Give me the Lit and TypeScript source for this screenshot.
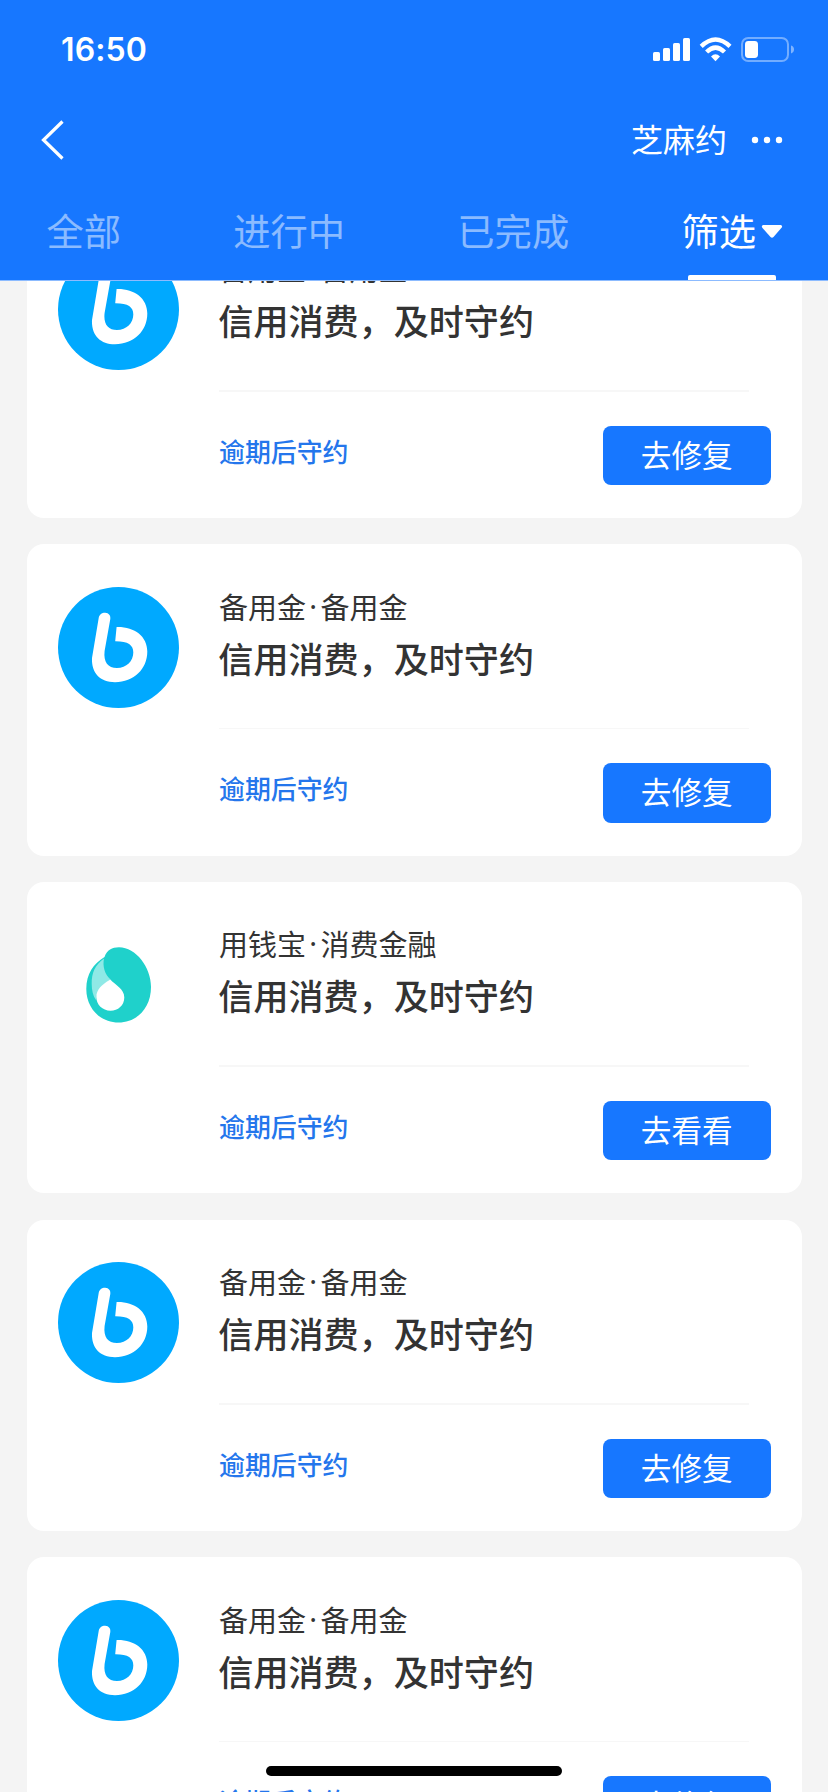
import { LitElement, html, css, svg } from "lit";
import { customElement, property } from "lit/decorators.js";
import { classMap } from "lit/directives/class-map.js";

interface Pledge {
  logo: "b" | "drop";
  brand: string;
  product: string;
  title: string;
  status: string;
  action: string;
}

const spare = (): Pledge => ({
  logo: "b",
  brand: "备用金",
  product: "备用金",
  title: "信用消费，及时守约",
  status: "逾期后守约",
  action: "去修复",
});

const ITEMS: Pledge[] = [
  spare(),
  spare(),
  { ...spare(), logo: "drop", brand: "用钱宝", product: "消费金融", action: "去看看" },
  spare(),
  spare(),
];

const TABS = ["全部", "进行中", "已完成"];

@customElement("status-bar")
export class StatusBar extends LitElement {
  static styles = css`
    :host {
      display: flex;
      justify-content: space-between;
      height: 100px;
      box-sizing: border-box;
      padding: 30px 32px 0 61px;
    }
    .time {
      font: 600 32px/40px Inter, sans-serif;
      letter-spacing: 0.1px;
      color: #fff;
    }
    .icons {
      width: 144px;
      height: 40px;
    }
  `;
  render() {
    return html`
      <span class="time">16:50</span>
      <svg class="icons" viewBox="652 30 144 40">
        <g fill="#fff">
          <rect x="653" y="52" width="7" height="9" rx="1.6" />
          <rect x="663" y="48" width="7" height="13" rx="1.6" />
          <rect x="673" y="43" width="7" height="18" rx="1.6" />
          <rect x="683" y="38" width="7" height="23" rx="1.6" />
          <path d="M711 56.600Q715.500 52 720 56.600L715.500 61.200Z" />
        </g>
        <g fill="none" stroke="#fff" stroke-width="4.4">
          <path d="M706.6 52Q715.5 43.2 724.5 52" />
          <path d="M701.2 46.3Q715.5 32.600 730 46.300" />
        </g>
        <rect x="742" y="38" width="46" height="23" rx="6.2" fill="none" stroke="#fff" stroke-opacity=".4" stroke-width="2" />
        <path d="M791 45.6Q794 46.6 794 49.5T791 53.4Z" fill="#fff" fill-opacity=".45" />
        <rect x="745" y="41" width="13" height="17" rx="3.4" fill="#fff" />
      </svg>
    `;
  }
}

@customElement("promise-card")
export class PromiseCard extends LitElement {
  @property({ attribute: false }) item!: Pledge;

  static styles = css`
    :host {
      display: grid;
      grid-template-columns: 121px 1fr;
      column-gap: 40px;
      box-sizing: border-box;
      height: 311.27px;
      flex: none;
      padding: 42.3px 31px 0 31.5px;
      border-radius: 17px;
      background: #fff;
    }
    .logo {
      width: 121px;
      height: 121px;
    }
    .body {
      display: flex;
      flex-direction: column;
    }
    .source {
      display: flex;
      height: 42px;
      font-size: 29px;
      line-height: 38px;
      color: #333;
    }
    .dot {
      display: flex;
      justify-content: center;
      width: 14.4px;
      font-family: "Noto Sans", sans-serif;
    }
    .title {
      margin: 5px 0 0 -0.7px;
      height: 50px;
      font-size: 35.1px;
      line-height: 47px;
      font-weight: 500;
      color: #333;
      white-space: nowrap;
    }
    .rule {
      height: 1.5px;
      margin: 44px 22px 0 0;
      background: #f7f7f7;
    }
    .foot {
      display: flex;
      justify-content: space-between;
      margin-top: 34px;
    }
    .status {
      margin-top: 6px;
      font-size: 25.9px;
      line-height: 37px;
      font-weight: 500;
      color: #2476ec;
    }
    .action {
      width: 167.5px;
      height: 59.5px;
      border: 0;
      padding: 0 0 3px;
      border-radius: 8px;
      background: #1777ff;
      color: #fff;
      font: inherit;
      font-size: 30.6px;
      line-height: 56px;
      text-align: center;
    }
  `;

  private logo() {
    return this.item.logo === "b"
      ? svg`
        <circle cx="60.5" cy="60.5" r="60.5" fill="#00a9ff" />
        <path d="M40.700 31C41.200 27.500 44 25.600 47.200 25.700C50.800 25.900 52.800 28.500 52.300 32L46.600 64C45.300 75 50 81 59 81C68.500 81 75.300 74 75.300 65.500C75.300 58 70 54.200 57.200 54.300L58.600 40C76 39.500 89.300 49 89.300 64.500C89.300 82 76 95 57 95.200C42 95.200 33.300 86 34 71Z" fill="#fff" />`
      : svg`
        <path d="M46.5 33C49 26 54 23.200 61 23.200C78 23.500 93 43 93 63C93 84 79 98.500 60.500 98.500C42 98.500 28.300 84 28.300 65C28.300 50 35.500 39.500 46.500 33Z" fill="#1fd1cb" />
        <path d="M46 34.500C37 41 33.500 49 33.700 60C33.700 66 35 72 38 76C38.500 67 43.500 61 52.500 55.500C46.500 50 44.500 42 46 34.500Z" fill="#8fe9e6" />
        <path d="M52.300 55.500C57 61 66.300 64.500 66.300 73.500C66.300 81.500 60 86.700 52.500 86.700C44.500 86.700 38.300 80.500 38.300 73C38.300 66 44 60 52.300 55.500Z" fill="#fff" />`;
  }

  render() {
    const { brand, product, title, status, action } = this.item;
    return html`
      <svg class="logo" viewBox="0 0 121 121">${this.logo()}</svg>
      <div class="body">
        <div class="source">
          <span>${brand}</span><span class="dot">·</span><span>${product}</span>
        </div>
        <div class="title">${title}</div>
        <div class="rule"></div>
        <div class="foot">
          <span class="status">${status}</span>
          <button class="action">${action}</button>
        </div>
      </div>
    `;
  }
}

@customElement("app-root")
export class AppRoot extends LitElement {
  static styles = css`
    :host {
      display: flex;
      flex-direction: column;
      position: relative;
      height: 1792px;
      overflow: hidden;
      background: #f4f4f4;
      font-family: "Noto Sans CJK SC", sans-serif;
    }
    .head {
      flex: none;
      height: 281px;
      box-sizing: border-box;
      background: #1777ff;
      border-bottom: 1px solid #8cbbff;
      color: #fff;
    }
    .nav {
      display: flex;
      align-items: center;
      height: 80px;
      padding: 0 45px 0 40px;
    }
    .back {
      width: 24px;
      height: 40px;
    }
    .name {
      margin-left: auto;
      padding-bottom: 4px;
      font-size: 32px;
      line-height: 46px;
    }
    .more {
      width: 32px;
      height: 8px;
      margin-left: 24px;
    }
    .tabs {
      display: flex;
      justify-content: space-between;
      height: 100px;
      padding: 0 45px 0 46.5px;
    }
    .tab {
      display: flex;
      flex-direction: column;
      align-items: center;
      justify-content: space-between;
      font-size: 37.3px;
      color: rgba(255, 255, 255, 0.5);
    }
    .label {
      display: flex;
      align-items: center;
      height: 54px;
      padding-top: 23px;
      line-height: 54px;
    }
    .active {
      color: #fff;
    }
    .caret {
      width: 22px;
      height: 13px;
      margin: 3px 0 0 5px;
    }
    .bar {
      width: 88px;
      height: 5px;
      border-radius: 2px 2px 0 0;
      background: #fff;
    }
    .list {
      display: flex;
      flex-direction: column;
      gap: 26.4px;
      flex: 1;
      min-height: 0;
      overflow: hidden;
      padding: 0 26.5px;
    }
    .first {
      margin-top: -74.27px;
    }
    .home {
      position: absolute;
      left: 266px;
      bottom: 16px;
      width: 296px;
      height: 10px;
      border-radius: 5px;
      background: #000;
    }
  `;

  render() {
    return html`
      <header class="head">
        <status-bar></status-bar>
        <div class="nav">
          <svg class="back" viewBox="0 0 24 40">
            <path d="M22.500 1.500L3.500 20L22.500 38.500" fill="none" stroke="#fff" stroke-width="3.200" />
          </svg>
          <span class="name">芝麻约</span>
          <svg class="more" viewBox="0 0 32 8" fill="#fff">
            <circle cx="4" cy="4" r="3.200" />
            <circle cx="16" cy="4" r="3.200" />
            <circle cx="28" cy="4" r="3.200" />
          </svg>
        </div>
        <nav class="tabs">
          ${TABS.map((t) => html`<div class="tab"><span class="label">${t}</span></div>`)}
          <div class="tab active">
            <span class="label">
              筛选
              <svg class="caret" viewBox="0 0 22 13">
                <path d="M2 0H20Q22 1 20.500 2.800L12.500 12Q11 13.500 9.500 12L1.300 2.800Q0 1 2 0Z" fill="#fff" />
              </svg>
            </span>
            <span class="bar"></span>
          </div>
        </nav>
      </header>
      <main class="list">
        ${ITEMS.map(
          (item, i) => html`<promise-card class=${classMap({ first: i === 0 })} .item=${item}></promise-card>`
        )}
      </main>
      <div class="home"></div>
    `;
  }
}
